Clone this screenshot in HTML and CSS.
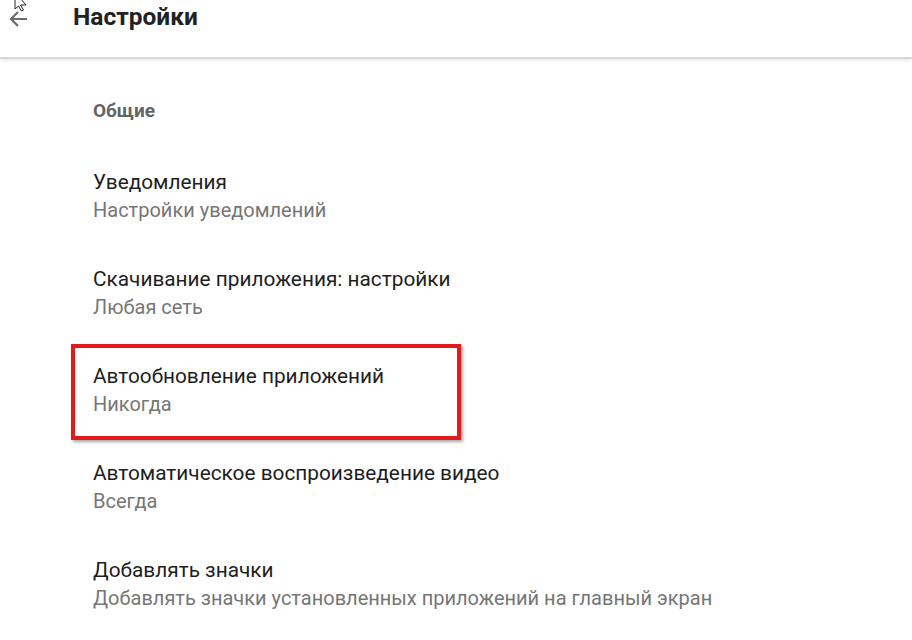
FILE: index.html
```html
<!DOCTYPE html>
<html lang="ru">
<head>
  <meta charset="UTF-8" />
  <meta name="viewport" content="width=device-width, initial-scale=1.0"/>
  <title>Настройки</title>
  <link rel="stylesheet" href="styles.css">
</head>
<body>

  <div class="шапка">
    <svg class="назад" width="20" height="18" viewBox="0 0 20 18">
      <path d="M19 9H3M10 2L3 9l7 7" fill="none" stroke="#6b6b6b" stroke-width="2.2"/>
    </svg>
    <h1>Настройки</h1>
    <svg class="курсор" width="14" height="12" viewBox="0 0 14 12">
      <path d="M1 -8V9l3.5-3 3 5 2-1-3-5H12z" fill="#fff" stroke="#222" stroke-width="1"/>
    </svg>
  </div>

  <div class="список">
    <div class="раздел">Общие</div>

    <div class="пункт">
      <div class="название">Уведомления</div>
      <div class="описание">Настройки уведомлений</div>
    </div>

    <div class="пункт">
      <div class="название">Скачивание приложения: настройки</div>
      <div class="описание">Любая сеть</div>
    </div>

    <div class="пункт выделен">
      <div class="название">Автообновление приложений</div>
      <div class="описание">Никогда</div>
    </div>

    <div class="пункт">
      <div class="название">Автоматическое воспроизведение видео</div>
      <div class="описание">Всегда</div>
    </div>

    <div class="пункт">
      <div class="название">Добавлять значки</div>
      <div class="описание">Добавлять значки установленных приложений на главный экран</div>
    </div>
  </div>

</body>
</html>
```

FILE: styles.css
```css
body {
  margin: 0;
  font-family: Roboto, "Noto Sans", Arial, sans-serif;
  background-color: #fff;
  color: #212121;
  overflow: hidden;
}

.шапка {
  position: relative;
  height: 57px;
  display: flex;
  align-items: flex-start;
  border-bottom: 2px solid #d6d6d6;
  box-shadow: 0 2px 4px rgba(0,0,0,0.08);
}

.назад {
  margin: 10px 0 0 8px;
}

h1 {
  margin: 2px 0 0 45px;
  font-size: 24.5px;
  font-weight: 700;
  color: #222;
}

.курсор {
  position: absolute;
  left: 14px;
  top: 0;
}

.список {
  padding-left: 93px;
}

.раздел {
  font-size: 19px;
  font-weight: 700;
  color: #646464;
  box-sizing: border-box;
  padding-top: 40px;
  height: 88px;
}

.пункт {
  height: 97px;
  display: flex;
  flex-direction: column;
  justify-content: center;
  gap: 4px;
}

.название {
  font-size: 20.8px;
  color: #1e1e1e;
}

.описание {
  font-size: 20px;
  color: #767676;
}

.выделен {
  position: relative;
}

.выделен::before {
  content: "";
  position: absolute;
  left: -22px;
  top: 3px;
  width: 382px;
  height: 88px;
  border: 4px solid #e01b1b;
  box-shadow: 2px 2px 3px rgba(0,0,0,0.35);
}
```
